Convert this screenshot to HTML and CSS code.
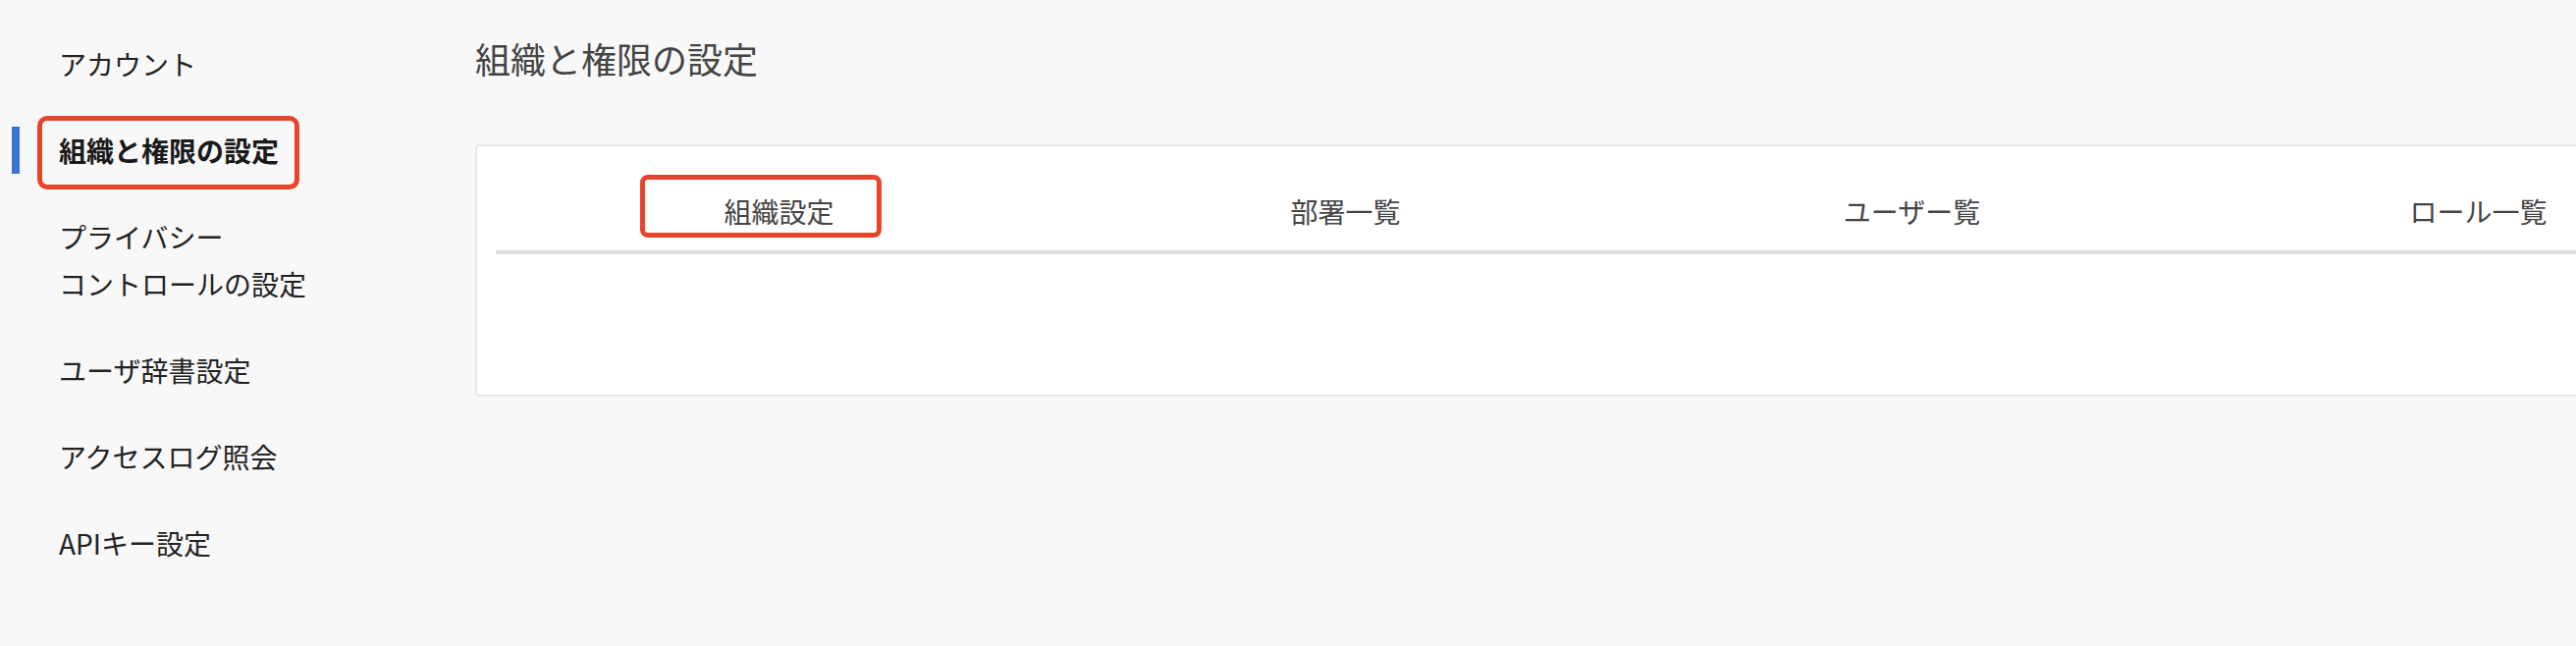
FILE: index.html
```html
<!DOCTYPE html>
<html lang="ja">
<head>
    <meta charset="UTF-8">
    <meta name="viewport" content="width=device-width, initial-scale=1.0">
    <title>組織と権限の設定</title>
    <link rel="stylesheet" href="styles.css">
</head>
<body>
<div class="layout">
    <nav class="sidebar">
        <div class="nav-item">アカウント</div>
        <div class="nav-item active"><span class="nav-label marked">組織と権限の設定</span></div>
        <div class="nav-item">プライバシー<br>コントロールの設定</div>
        <div class="nav-item">ユーザ辞書設定</div>
        <div class="nav-item">アクセスログ照会</div>
        <div class="nav-item">APIキー設定</div>
    </nav>

    <main class="content">
        <h1 class="page-title">組織と権限の設定</h1>

        <div class="card">
            <div class="tabs">
                <div class="tab active"><span class="tab-label marked">組織設定</span></div>
                <div class="tab"><span class="tab-label">部署一覧</span></div>
                <div class="tab"><span class="tab-label">ユーザー覧</span></div>
                <div class="tab"><span class="tab-label">ロール一覧</span></div>
            </div>
            <div class="tab-body"></div>
        </div>
    </main>
</div>
</body>
</html>
```

FILE: styles.css
```css
html, body {
    margin: 0;
    height: 100%;
    overflow: hidden;
    background: #f8f8f8;
}

body {
    font-family: "Noto Sans CJK JP", "Noto Sans", sans-serif;
    color: #222;
}

.layout {
    display: flex;
}

/* Sidebar */
.sidebar {
    width: 484px;
    flex-shrink: 0;
    padding-top: 21px;
    display: flex;
    flex-direction: column;
}

.nav-item {
    position: relative;
    padding: 20px 0 20px 60px;
    font-size: 28px;
    line-height: 48px;
    color: #222;
    cursor: pointer;
}

.nav-item.active {
    font-weight: bold;
    color: #1a1a1a;
}

.nav-item.active::before {
    content: "";
    position: absolute;
    left: 12px;
    top: 20px;
    width: 8px;
    height: 48px;
    background: #3a74cf;
}

.nav-label,
.tab-label {
    display: inline-block;
    position: relative;
}

/* Red highlight frames */
.marked::after {
    content: "";
    position: absolute;
    border: 5px solid #e8442b;
    pointer-events: none;
}

.nav-label.marked::after {
    top: -11px;
    bottom: -16px;
    left: -22px;
    right: -21px;
    border-radius: 10px;
}

.tab-label.marked::after {
    top: -17px;
    bottom: -7px;
    left: -85px;
    right: -48px;
    border-radius: 8px;
}

/* Main */
.content {
    flex: 1;
    min-width: 0;
    padding-top: 32px;
    overflow: hidden;
}

.page-title {
    margin: 0 0 61px 0;
    font-size: 36px;
    line-height: 54px;
    font-weight: normal;
    color: #444;
}

.card {
    width: max-content;
    background: #fff;
    border: 2px solid #e6e6e6;
    border-radius: 4px;
    padding: 20px 19px 0;
}

.tabs {
    display: grid;
    grid-template-columns: repeat(4, 577px);
    border-bottom: 4px solid #dedede;
}

.tab {
    text-align: center;
    padding: 26px 0 20px;
    font-size: 28px;
    line-height: 40px;
    color: #444;
    cursor: pointer;
}

.tab-body {
    height: 143px;
}
```
